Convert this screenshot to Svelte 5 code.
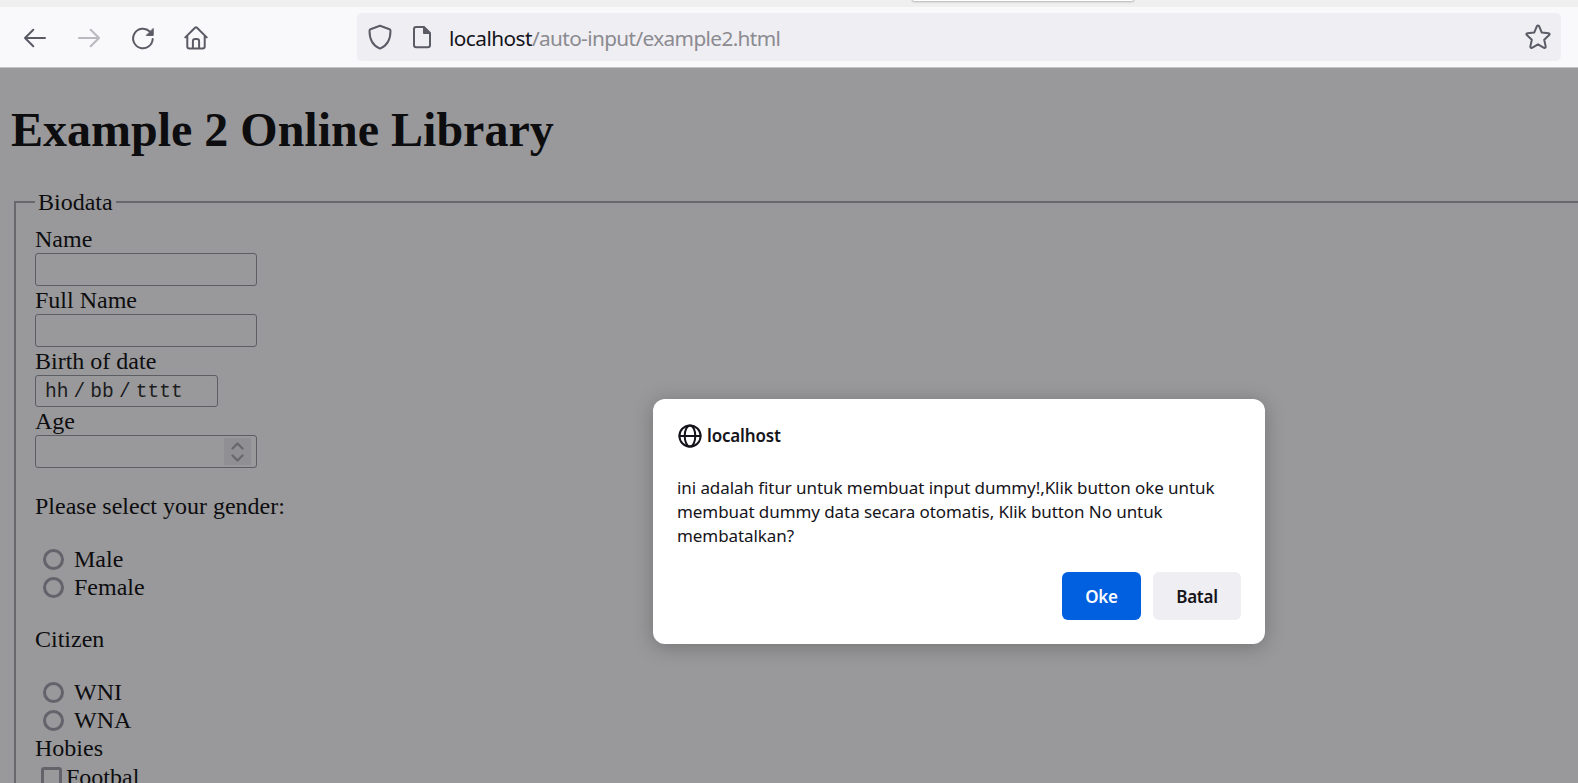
<script>
  const genders = ['Male', 'Female'];
  const citizens = ['WNI', 'WNA'];
  const message = [
    'ini adalah fitur untuk membuat input dummy!,Klik button oke untuk',
    'membuat dummy data secara otomatis, Klik button No untuk',
    'membatalkan?'
  ];
</script>

<div class="window">
  <div class="strip"><div class="tab"></div></div>

  <header class="toolbar">
    <nav class="nav">
      <svg width="24" height="24" viewBox="0 0 24 24"><path d="M22 12H2.2M10.3 3.8 2 12l8.3 8.2" /></svg>
      <svg class="off" width="24" height="24" viewBox="0 0 24 24"><path d="M2 12h19.8M13.700 3.800 22 12l-8.300 8.200" /></svg>
      <svg width="24" height="24" viewBox="0 0 24 24"><path d="M21.700 13A9.800 9.800 0 1 1 18.800 5.500" /><path class="solid" d="M22.200 2.800v6.600h-6.600z" /></svg>
      <svg class="home" width="24" height="24" viewBox="0 0 24 24"><path d="M1.300 11.400 11 1.700q1-.9 2 0l9.700 9.700M3.300 9.800v10.600q0 2 2 2h13.400q2 0 2-2V9.800M8.900 22v-6.700q0-2.200 2.200-2.200h1.800q2.200 0 2.200 2.200V22" /></svg>
    </nav>
    <div class="address">
      <svg width="24" height="26" viewBox="0 0 24 26"><path d="M12 1.800 21.500 5.200q1 .4 1 1.500C22.500 15 19.500 21.500 12 24.600 4.500 21.500 1.500 15 1.500 6.700q0-1.100 1-1.500z" /></svg>
      <svg class="page-icon" width="20" height="24" viewBox="0 0 20 24"><path d="M4 2h8l6 6v12q0 2.200-2.200 2.200H4.200Q2 22.200 2 20V4.200Q2 2 4 2z" /><path class="solid" d="M11.500 2v6.500H18z" /></svg>
      <span class="url"><b>localhost</b>/auto-input/example2.html</span>
      <svg class="star" width="26" height="26" viewBox="0 0 26 26"><path d="M11.900 2.200q1.100-1.500 2.200 0l2.700 6.400 6.700.6q1.800.4.700 1.900l-5 4.600 1.500 6.900q0 1.800-1.700 1.200L13 20.300l-6 3.500q-1.700.6-1.700-1.200l1.500-6.900-5-4.600q-1.100-1.500.7-1.900l6.700-.6z" /></svg>
    </div>
  </header>

  <main class="page">
    <h1>Example 2 Online Library</h1>
    <fieldset>
      <legend>Biodata</legend>
      <label for="name">Name</label>
      <input id="name" class="box" type="text" />
      <label for="full">Full Name</label>
      <input id="full" class="box" type="text" />
      <div class="line">Birth of date</div>
      <div class="box date"><span>hh</span><i>/</i><span>bb</span><i>/</i><span>tttt</span></div>
      <div class="line">Age</div>
      <div class="box age">
        <div class="spin">
          <svg width="13" height="20" viewBox="0 0 13 20"><path d="M1.500 6.500l5-5 5 5M1.500 13.500l5 5 5-5" /></svg>
        </div>
      </div>
      <p class="question">Please select your gender:</p>
      {#each genders as item}
        <div class="option"><span class="radio"></span>{item}</div>
      {/each}
      <p class="question">Citizen</p>
      {#each citizens as item}
        <div class="option"><span class="radio"></span>{item}</div>
      {/each}
      <div class="line">Hobies</div>
      <div class="option check"><span class="checkbox"></span>Footbal</div>
    </fieldset>
  </main>

  <div class="dialog" role="dialog">
    <div class="title">
      <svg width="24" height="24" viewBox="0 0 24 24"><circle cx="12" cy="12" r="10.600" /><ellipse cx="12" cy="12" rx="5.300" ry="10.600" /><path d="M1.500 12h21" /></svg>
      <span>localhost</span>
    </div>
    <div class="message">
      {#each message as text}<div>{text}</div>{/each}
    </div>
    <div class="buttons">
      <button class="primary">Oke</button>
      <button class="cancel">Batal</button>
    </div>
  </div>
</div>

<style>
  :global(body) { margin: 0; overflow: hidden; }
  * { box-sizing: border-box; }
  svg { display: block; flex: none; fill: none; stroke: #5b5b66; stroke-width: 2; stroke-linecap: round; stroke-linejoin: round; }
  .solid { fill: #5b5b66; stroke-width: 1; }
  .window { position: relative; width: 1578px; height: 783px; overflow: hidden; display: flex; flex-direction: column; background: #99999b; }
  .strip { height: 7px; flex: none; background: #efefef; overflow: hidden; }
  .tab { margin-left: 913px; width: 220px; height: 1px; background: #fff; box-shadow: 0 0 2px 1px #b4b4b8; border-radius: 0 0 4px 4px; }
  .toolbar { height: 61px; flex: none; display: flex; align-items: flex-start; background: #f9f9fb; border-bottom: 1px solid #c4c4c7; }
  .nav { width: 357px; padding: 19px 0 0 23px; display: flex; gap: 30px; }
  .home { margin-left: -1px; }
  .off { opacity: .4; }
  .address { margin-top: 6px; width: 1204px; height: 48px; padding: 0 10px 0 11px; display: flex; align-items: center; background: #efeef3; border-radius: 5px; }
  .page-icon { margin-left: 20px; }
  .url { margin-left: 17px; padding-top: 2px; font: 20.8px/30px "Noto Sans", sans-serif; letter-spacing: -.63px; color: #8b8b90; white-space: nowrap; }
  .url b { font-weight: 400; letter-spacing: -.55px; color: #15141a; }
  .star { margin-left: auto; }
  .page { flex: 1; min-height: 0; color: #0d0d0f; font: 24px/28px "Liberation Serif", serif; }
  h1 { margin: 35px 0 0 11px; height: 54px; font-size: 48px; line-height: 54px; font-weight: 700; white-space: nowrap; }
  fieldset { display: block; margin: 31px 0 0 14px; width: 1620px; height: 700px; min-width: 0; padding: 9px 18px 0; border: 2px groove #c0c0c4; border-color: #68686c; border-style: solid; }
  legend { height: 28px; padding: 0 3px; margin-left: 1px; }
  label, .line { display: block; height: 28px; }
  label, .line, .box, .question, .option { margin-left: 1px; }
  .box { display: flex; width: 222px; height: 33px; padding: 0; background: #99999b; border: 1px solid #5d5d64; border-radius: 3px; outline: 0; }
  .date { width: 183px; height: 32px; padding: 2px 0 0 9px; align-items: center; color: #1c1c20; font: 19.6px/28px "Liberation Mono", monospace; }
  .date i { width: 21.800px; text-align: center; font-style: normal; }
  .age { justify-content: flex-end; align-items: center; padding-right: 5px; }
  .spin { width: 27px; height: 27px; background: #8f8f94; display: flex; justify-content: center; align-items: center; }
  .spin svg { stroke: #67676d; stroke-width: 2.200; }
  .question { margin-top: 24px; margin-bottom: 25px; height: 28px; }
  .option { height: 28px; display: flex; padding-left: 8px; gap: 10px; }
  .radio { width: 21px; height: 21px; margin-top: 4px; border: 3px solid #64636c; border-radius: 50%; }
  .check { margin-top: 1px; padding-left: 6px; gap: 4px; }
  .checkbox { width: 21px; height: 21px; margin-top: 4px; border: 3px solid #64636c; border-radius: 3px; }
  .dialog { position: absolute; left: 653px; top: 399px; width: 612px; height: 245px; padding: 25px 24px 24px; border-radius: 12px; background: #fff; color: #15141a; box-shadow: 0 3px 20px rgba(0,0,0,.25); font: 17px/24px "Noto Sans", sans-serif; white-space: nowrap; display: flex; flex-direction: column; }
  .title { display: flex; gap: 5px; font-weight: 600; letter-spacing: -.17px; margin-left: 1px; }
  .title svg { stroke: #15141a; }
  .message { margin-top: 28px; letter-spacing: -.075px; }
  .buttons { margin-top: auto; display: flex; justify-content: flex-end; gap: 12px; }
  button { height: 48px; padding: 2px 0 0; border: 0; border-radius: 6px; font: 600 17px/24px "Noto Sans", sans-serif; letter-spacing: -.25px; }
  .primary { width: 79px; background: #0060df; color: #fbfbfe; }
  .cancel { width: 88px; background: #efeef3; color: #15141a; }
</style>
